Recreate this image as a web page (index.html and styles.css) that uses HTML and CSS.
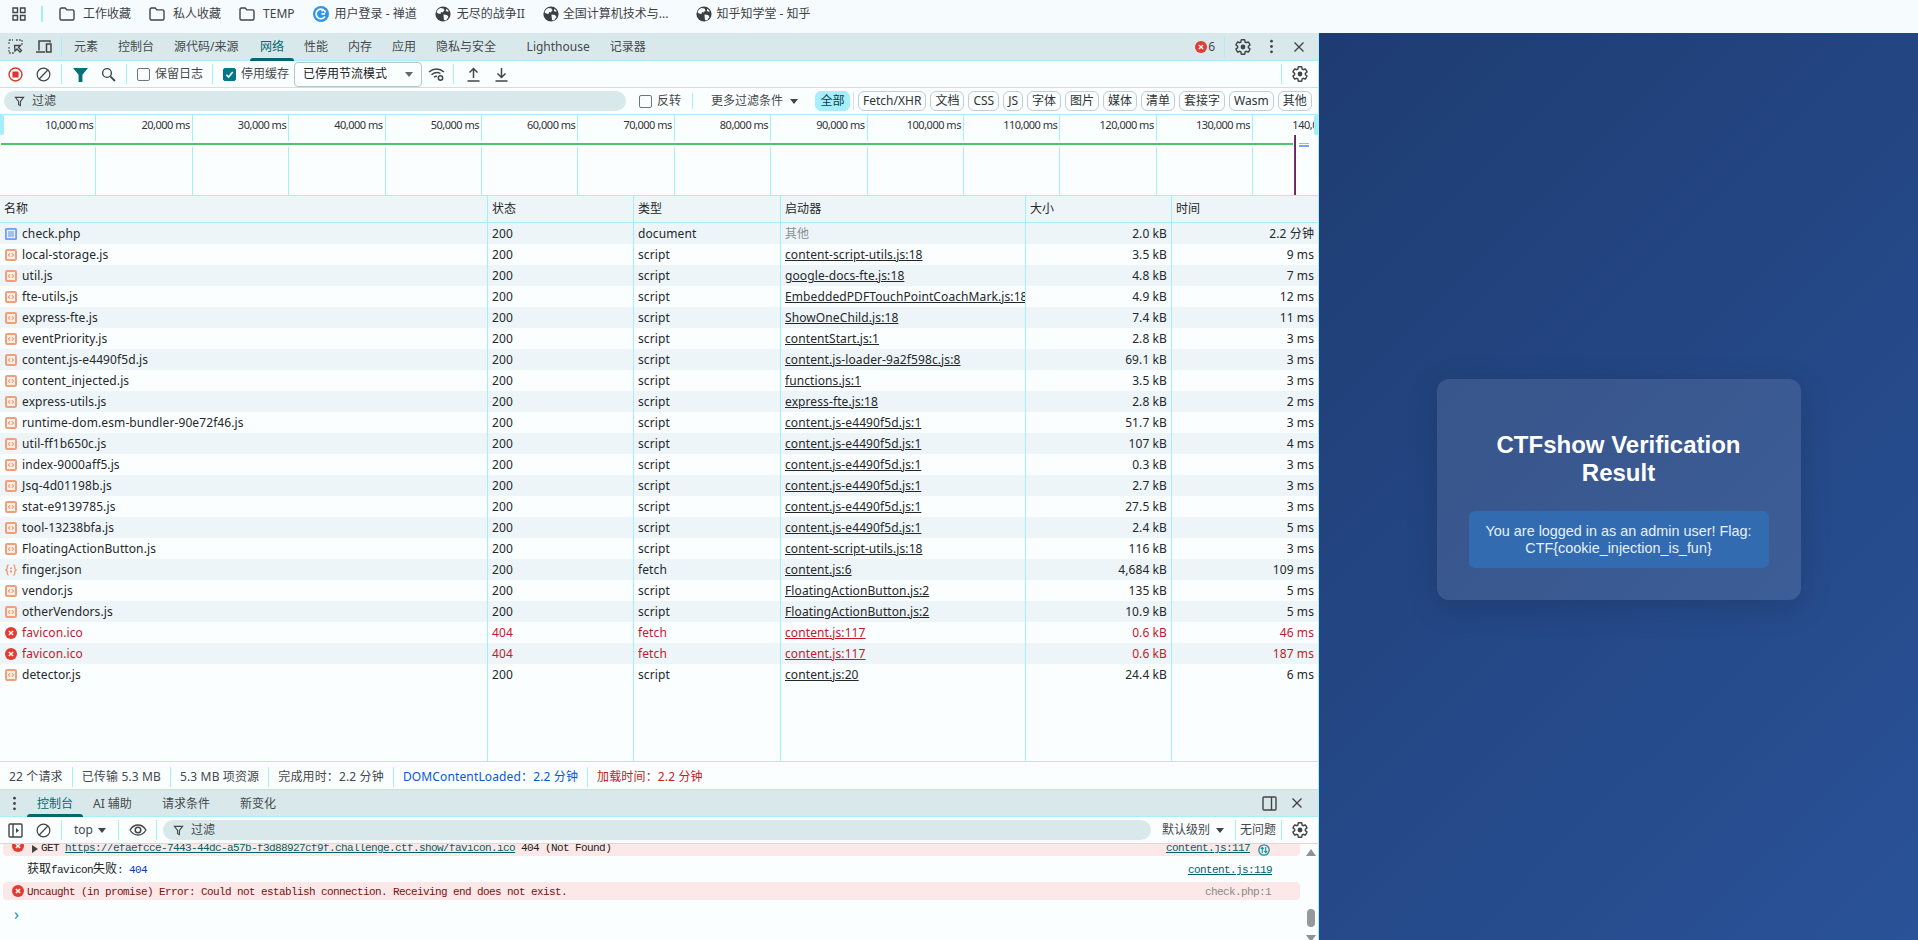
FILE: index.html
```html
<!DOCTYPE html>
<html lang="zh-CN">
<head>
<meta charset="utf-8">
<title>CTFshow Verification Result</title>
<link rel="stylesheet" href="styles.css">
</head>
<body>
<svg class="defs" aria-hidden="true">
  <symbol id="i-folder" viewBox="0 0 16 14"><path d="M1 2.500C1 1.700 1.600 1 2.400 1h3.800l1.600 1.900h5.800c.8 0 1.400.7 1.400 1.500v7.100c0 .8-.6 1.500-1.400 1.500H2.400c-.8 0-1.400-.7-1.400-1.500z" fill="none" stroke="#444" stroke-width="1.400"/></symbol>
  <symbol id="i-globe" viewBox="0 0 16 16"><circle cx="8" cy="8" r="7.600" fill="#3c4043"/><path d="M3 3.500 5.500 2l3 .5 1 2-2 2-1.500-.5-.5 2-2.500-.5L1.400 6zM8.500 8.500l3.500.5 1.500 2L11 14.500l-2-.5-.3-2.500zM11.500 2.800l2.400 2.400-1.900.6-1.200-1.200z" fill="#f8fcff"/></symbol>
  <symbol id="i-js" viewBox="0 0 12 12"><rect x="1" y="1" width="10" height="10" rx="1.200" fill="#fdeee6" stroke="#ee9f7c" stroke-width="2"/><path d="M5 4.200 3.500 6 5 7.800M7 4.200 8.500 6 7 7.800" fill="none" stroke="#e8794a" stroke-width="1"/></symbol>
  <symbol id="i-doc" viewBox="0 0 12 12"><rect width="12" height="12" rx="1.500" fill="#6f9ff7"/><rect x="1.800" y="1.800" width="8.400" height="8.400" fill="#e9f1ff"/><path d="M3 4h6M3 6h6M3 8h6" stroke="#5b8df0" stroke-width="1"/></symbol>
  <symbol id="i-err" viewBox="0 0 12 12"><circle cx="6" cy="6" r="6" fill="#e03c32"/><path d="M3.900 3.900l4.200 4.200M8.100 3.900 3.900 8.100" stroke="#fff" stroke-width="1.400"/></symbol>
  <symbol id="i-json" viewBox="0 0 12 12"><path d="M3.600 1C2 1 2.400 3 2.200 4.200 2 5.400 1 6 1 6s1 .6 1.200 1.800C2.400 9 2 11 3.600 11M8.400 1c1.600 0 1.200 2 1.400 3.200C10 5.400 11 6 11 6s-1 .6-1.200 1.800C9.600 9 10 11 8.400 11" fill="none" stroke="#ee9f7c" stroke-width="1.500"/><path d="M6 3.500v1.400M6 6.500v2" stroke="#e8794a" stroke-width="1.500"/></symbol>
  <symbol id="i-gear" viewBox="0 0 24 24"><path d="M19.140 12.940c.04-.3.06-.61.06-.94 0-.32-.02-.64-.07-.94l2.030-1.580c.18-.14.23-.41.12-.61l-1.920-3.320c-.12-.22-.37-.29-.59-.22l-2.390.96c-.5-.38-1.030-.7-1.620-.94l-.36-2.540c-.04-.24-.24-.41-.48-.41h-3.840c-.24 0-.43.17-.47.41l-.36 2.540c-.59.24-1.130.57-1.620.94l-2.390-.96c-.22-.08-.47 0-.59.22L2.740 8.870c-.12.21-.08.47.12.61l2.030 1.580c-.05.3-.09.63-.09.94s.02.64.07.94l-2.030 1.580c-.18.14-.23.41-.12.61l1.920 3.320c.12.22.37.29.59.22l2.390-.96c.5.38 1.030.7 1.620.94l.36 2.540c.05.24.24.41.48.41h3.840c.24 0 .44-.17.47-.41l.36-2.540c.59-.24 1.130-.56 1.620-.94l2.390.96c.22.08.47 0 .59-.22l1.920-3.320c.12-.22.07-.47-.12-.61l-2.010-1.580z" fill="none" stroke="#444" stroke-width="1.900"/><circle cx="12" cy="12" r="3.200" fill="#444"/></symbol>
  <symbol id="i-close" viewBox="0 0 12 12"><path d="M1.500 1.500l9 9M10.500 1.500l-9 9" stroke="#444" stroke-width="1.400"/></symbol>
  <symbol id="i-block" viewBox="0 0 16 16"><circle cx="8" cy="8" r="6.800" fill="none" stroke="#444" stroke-width="1.300"/><path d="M3.400 12.800 12.600 3.200" stroke="#444" stroke-width="1.300"/></symbol>
  <symbol id="i-funnel" viewBox="0 0 12 12"><path d="M1.500 1.500h9L7 6v4.500L5 9.500V6z" fill="none" stroke="#444" stroke-width="1.200"/></symbol>
</svg>

<nav class="bookmarks">
  <svg class="bm-apps" viewBox="0 0 14 14"><path d="M1 1h4.500v4.500H1zM8.500 1H13v4.500H8.500zM1 8.500h4.500V13H1zM8.500 8.500H13V13H8.500z" fill="none" stroke="#444" stroke-width="1.400"/></svg>
  <span class="bm-sep"></span>
  <a class="bm"><svg class="bm-ic"><use href="#i-folder"/></svg>工作收藏</a>
  <a class="bm"><svg class="bm-ic"><use href="#i-folder"/></svg>私人收藏</a>
  <a class="bm"><svg class="bm-ic"><use href="#i-folder"/></svg>TEMP</a>
  <a class="bm"><svg class="bm-ic bm-round" viewBox="0 0 16 16"><circle cx="8" cy="8" r="8" fill="#2f95ec"/><path d="M12.500 6.500A4.800 4.800 0 1 0 12 10.500M12 7.800H8.500M11 3.500 8.500 5" fill="none" stroke="#fff" stroke-width="1.700"/></svg>用户登录 - 禅道</a>
  <a class="bm"><svg class="bm-ic bm-round"><use href="#i-globe"/></svg>无尽的战争II</a>
  <a class="bm"><svg class="bm-ic bm-round"><use href="#i-globe"/></svg>全国计算机技术与...</a>
  <a class="bm bm-last"><svg class="bm-ic bm-round"><use href="#i-globe"/></svg>知乎知学堂 - 知乎</a>
</nav>

<div class="workspace">
  <section class="devtools">
    <header class="tabbar main-tabs">
      <button class="ib"><svg class="i15" viewBox="0 0 15 15"><path d="M1 5V1.500M1 1h4M8 1h6M14 1v6M1 8v6M1 14h5" fill="none" stroke="#555" stroke-width="1.300" stroke-dasharray="1.800 1.200"/><path d="M6.500 6.500h6L10.500 8.500l3 3-1.500 1.500-3-3-2 2z" fill="none" stroke="#444" stroke-width="1.300"/></svg></button>
      <button class="ib"><svg class="i17" viewBox="0 0 17 15"><path d="M4 11.500V2h11v1.500M1 13h9" fill="none" stroke="#444" stroke-width="1.500"/><rect x="11.500" y="5" width="4.500" height="8" fill="none" stroke="#444" stroke-width="1.500"/></svg></button>
      <span class="sep"></span>
      <a class="tab first">元素</a><a class="tab">控制台</a><a class="tab t-src">源代码/来源</a><a class="tab on">网络</a><a class="tab">性能</a><a class="tab">内存</a><a class="tab">应用</a><a class="tab">隐私与安全</a><a class="tab wide">Lighthouse</a><a class="tab">记录器</a>
      <span class="badge"><svg class="i12"><use href="#i-err"/></svg>6</span>
      <span class="sep"></span>
      <button class="ib"><svg class="i18"><use href="#i-gear"/></svg></button>
      <button class="ib"><svg class="i15" viewBox="0 0 4 14"><circle cx="2" cy="2" r="1.300" fill="#444"/><circle cx="2" cy="7" r="1.300" fill="#444"/><circle cx="2" cy="12" r="1.300" fill="#444"/></svg></button>
      <button class="ib"><svg class="i12"><use href="#i-close"/></svg></button>
    </header>

    <div class="bar">
      <button class="ib"><svg class="i15" viewBox="0 0 16 16"><circle cx="8" cy="8" r="6.900" fill="none" stroke="#dc362e" stroke-width="1.500"/><rect x="4.700" y="4.700" width="6.600" height="6.600" rx=".6" fill="#dc362e"/></svg></button>
      <button class="ib"><svg class="i15"><use href="#i-block"/></svg></button>
      <span class="sep"></span>
      <button class="ib"><svg class="i15" viewBox="0 0 14 14"><path d="M0 1h14L8.800 7.300V14H5.200V7.300z" fill="#00707a"/></svg></button>
      <button class="ib"><svg class="i15" viewBox="0 0 15 15"><circle cx="6" cy="6" r="4.400" fill="none" stroke="#444" stroke-width="1.400"/><path d="M9.300 9.300 14 14" stroke="#444" stroke-width="1.800"/></svg></button>
      <span class="sep"></span>
      <label class="chk chk-first"><span class="box"></span>保留日志</label>
      <span class="sep sep-w"></span>
      <label class="chk"><span class="box checked"><svg viewBox="0 0 12 12"><path d="M2.500 6.200 5 8.700l4.500-5.400" fill="none" stroke="#fff" stroke-width="1.700"/></svg></span>停用缓存</label>
      <span class="select">已停用节流模式<i class="caret"></i></span>
      <button class="ib"><svg class="i17" viewBox="0 0 17 14"><path d="M1 4.500C5.500.5 11.500.5 16 4.500M3.500 7.200C6.500 4.700 10 4.500 12.500 6M6 9.800c1-.9 2-1.200 3-1.100" fill="none" stroke="#444" stroke-width="1.400"/><circle cx="12.500" cy="10.500" r="2.200" fill="none" stroke="#444" stroke-width="1.500"/></svg></button>
      <span class="sep sep-n"></span>
      <button class="ib"><svg class="i15" viewBox="0 0 14 15"><path d="M7 11V1.500M3 5.500l4-4 4 4M1 14h12" fill="none" stroke="#444" stroke-width="1.500"/></svg></button>
      <button class="ib"><svg class="i15" viewBox="0 0 14 15"><path d="M7 1v9.500M3 6.500l4 4 4-4M1 14h12" fill="none" stroke="#444" stroke-width="1.500"/></svg></button>
      <span class="sep push"></span>
      <button class="ib"><svg class="i18"><use href="#i-gear"/></svg></button>
    </div>

    <div class="bar filters">
      <div class="search net-search"><svg class="i11"><use href="#i-funnel"/></svg>过滤</div>
      <label class="chk chk-invert"><span class="box"></span>反转</label>
      <span class="sep sep-f"></span>
      <span class="more">更多过滤条件<i class="caret dark"></i></span>
      <span class="chip on">全部</span>
      <span class="sep sep-c"></span>
      <span class="chip">Fetch/XHR</span><span class="chip">文档</span><span class="chip">CSS</span><span class="chip">JS</span><span class="chip">字体</span><span class="chip">图片</span><span class="chip">媒体</span><span class="chip">清单</span><span class="chip">套接字</span><span class="chip">Wasm</span><span class="chip">其他</span>
    </div>

    <div class="timeline">
      <span class="tick">10,000 ms</span><span class="tick">20,000 ms</span><span class="tick">30,000 ms</span><span class="tick">40,000 ms</span><span class="tick">50,000 ms</span><span class="tick">60,000 ms</span><span class="tick">70,000 ms</span><span class="tick">80,000 ms</span><span class="tick">90,000 ms</span><span class="tick">100,000 ms</span><span class="tick">110,000 ms</span><span class="tick">120,000 ms</span><span class="tick">130,000 ms</span><span class="tick">140,000 ms</span>
      <i class="tl-green"></i><i class="tl-dom"></i><i class="tl-load"></i><i class="tl-bar"></i><i class="tl-handle left"></i><i class="tl-handle right"></i>
    </div>

    <div class="row head"><span class="c">名称</span><span class="c">状态</span><span class="c">类型</span><span class="c">启动器</span><span class="c">大小</span><span class="c">时间</span></div>
    <div class="rows">
      <div class="row"><span class="c n"><svg class="i12"><use href="#i-doc"/></svg>check.php</span><span class="c">200</span><span class="c">document</span><span class="c muted">其他</span><span class="c r">2.0 kB</span><span class="c r">2.2 分钟</span></div>
      <div class="row"><span class="c n"><svg class="i12"><use href="#i-js"/></svg>local-storage.js</span><span class="c">200</span><span class="c">script</span><span class="c"><u>content-script-utils.js:18</u></span><span class="c r">3.5 kB</span><span class="c r">9 ms</span></div>
      <div class="row"><span class="c n"><svg class="i12"><use href="#i-js"/></svg>util.js</span><span class="c">200</span><span class="c">script</span><span class="c"><u>google-docs-fte.js:18</u></span><span class="c r">4.8 kB</span><span class="c r">7 ms</span></div>
      <div class="row"><span class="c n"><svg class="i12"><use href="#i-js"/></svg>fte-utils.js</span><span class="c">200</span><span class="c">script</span><span class="c"><u>EmbeddedPDFTouchPointCoachMark.js:18</u></span><span class="c r">4.9 kB</span><span class="c r">12 ms</span></div>
      <div class="row"><span class="c n"><svg class="i12"><use href="#i-js"/></svg>express-fte.js</span><span class="c">200</span><span class="c">script</span><span class="c"><u>ShowOneChild.js:18</u></span><span class="c r">7.4 kB</span><span class="c r">11 ms</span></div>
      <div class="row"><span class="c n"><svg class="i12"><use href="#i-js"/></svg>eventPriority.js</span><span class="c">200</span><span class="c">script</span><span class="c"><u>contentStart.js:1</u></span><span class="c r">2.8 kB</span><span class="c r">3 ms</span></div>
      <div class="row"><span class="c n"><svg class="i12"><use href="#i-js"/></svg>content.js-e4490f5d.js</span><span class="c">200</span><span class="c">script</span><span class="c"><u>content.js-loader-9a2f598c.js:8</u></span><span class="c r">69.1 kB</span><span class="c r">3 ms</span></div>
      <div class="row"><span class="c n"><svg class="i12"><use href="#i-js"/></svg>content_injected.js</span><span class="c">200</span><span class="c">script</span><span class="c"><u>functions.js:1</u></span><span class="c r">3.5 kB</span><span class="c r">3 ms</span></div>
      <div class="row"><span class="c n"><svg class="i12"><use href="#i-js"/></svg>express-utils.js</span><span class="c">200</span><span class="c">script</span><span class="c"><u>express-fte.js:18</u></span><span class="c r">2.8 kB</span><span class="c r">2 ms</span></div>
      <div class="row"><span class="c n"><svg class="i12"><use href="#i-js"/></svg>runtime-dom.esm-bundler-90e72f46.js</span><span class="c">200</span><span class="c">script</span><span class="c"><u>content.js-e4490f5d.js:1</u></span><span class="c r">51.7 kB</span><span class="c r">3 ms</span></div>
      <div class="row"><span class="c n"><svg class="i12"><use href="#i-js"/></svg>util-ff1b650c.js</span><span class="c">200</span><span class="c">script</span><span class="c"><u>content.js-e4490f5d.js:1</u></span><span class="c r">107 kB</span><span class="c r">4 ms</span></div>
      <div class="row"><span class="c n"><svg class="i12"><use href="#i-js"/></svg>index-9000aff5.js</span><span class="c">200</span><span class="c">script</span><span class="c"><u>content.js-e4490f5d.js:1</u></span><span class="c r">0.3 kB</span><span class="c r">3 ms</span></div>
      <div class="row"><span class="c n"><svg class="i12"><use href="#i-js"/></svg>Jsq-4d01198b.js</span><span class="c">200</span><span class="c">script</span><span class="c"><u>content.js-e4490f5d.js:1</u></span><span class="c r">2.7 kB</span><span class="c r">3 ms</span></div>
      <div class="row"><span class="c n"><svg class="i12"><use href="#i-js"/></svg>stat-e9139785.js</span><span class="c">200</span><span class="c">script</span><span class="c"><u>content.js-e4490f5d.js:1</u></span><span class="c r">27.5 kB</span><span class="c r">3 ms</span></div>
      <div class="row"><span class="c n"><svg class="i12"><use href="#i-js"/></svg>tool-13238bfa.js</span><span class="c">200</span><span class="c">script</span><span class="c"><u>content.js-e4490f5d.js:1</u></span><span class="c r">2.4 kB</span><span class="c r">5 ms</span></div>
      <div class="row"><span class="c n"><svg class="i12"><use href="#i-js"/></svg>FloatingActionButton.js</span><span class="c">200</span><span class="c">script</span><span class="c"><u>content-script-utils.js:18</u></span><span class="c r">116 kB</span><span class="c r">3 ms</span></div>
      <div class="row"><span class="c n"><svg class="i12"><use href="#i-json"/></svg>finger.json</span><span class="c">200</span><span class="c">fetch</span><span class="c"><u>content.js:6</u></span><span class="c r">4,684 kB</span><span class="c r">109 ms</span></div>
      <div class="row"><span class="c n"><svg class="i12"><use href="#i-js"/></svg>vendor.js</span><span class="c">200</span><span class="c">script</span><span class="c"><u>FloatingActionButton.js:2</u></span><span class="c r">135 kB</span><span class="c r">5 ms</span></div>
      <div class="row"><span class="c n"><svg class="i12"><use href="#i-js"/></svg>otherVendors.js</span><span class="c">200</span><span class="c">script</span><span class="c"><u>FloatingActionButton.js:2</u></span><span class="c r">10.9 kB</span><span class="c r">5 ms</span></div>
      <div class="row err"><span class="c n"><svg class="i12"><use href="#i-err"/></svg>favicon.ico</span><span class="c">404</span><span class="c">fetch</span><span class="c"><u>content.js:117</u></span><span class="c r">0.6 kB</span><span class="c r">46 ms</span></div>
      <div class="row err"><span class="c n"><svg class="i12"><use href="#i-err"/></svg>favicon.ico</span><span class="c">404</span><span class="c">fetch</span><span class="c"><u>content.js:117</u></span><span class="c r">0.6 kB</span><span class="c r">187 ms</span></div>
      <div class="row"><span class="c n"><svg class="i12"><use href="#i-js"/></svg>detector.js</span><span class="c">200</span><span class="c">script</span><span class="c"><u>content.js:20</u></span><span class="c r">24.4 kB</span><span class="c r">6 ms</span></div>
      <div class="row filler"><span class="c"></span><span class="c"></span><span class="c"></span><span class="c"></span><span class="c"></span><span class="c"></span></div>
    </div>

    <footer class="status">
      <span class="st">22 个请求</span><span class="st">已传输 5.3 MB</span><span class="st">5.3 MB 项资源</span><span class="st">完成用时：2.2 分钟</span><span class="st blue">DOMContentLoaded：2.2 分钟</span><span class="st red">加载时间：2.2 分钟</span>
    </footer>

    <header class="tabbar drawer-tabs">
      <button class="ib dots"><svg class="i15" viewBox="0 0 4 14"><circle cx="2" cy="2" r="1.300" fill="#444"/><circle cx="2" cy="7" r="1.300" fill="#444"/><circle cx="2" cy="12" r="1.300" fill="#444"/></svg></button>
      <a class="tab on">控制台</a><a class="tab">AI 辅助</a><a class="tab t-req">请求条件</a><a class="tab t-new">新变化</a>
      <button class="ib push"><svg class="i15" viewBox="0 0 15 15"><rect x="1" y="1" width="13" height="13" rx="1" fill="none" stroke="#444" stroke-width="1.400"/><path d="M9.500 1v13" stroke="#444" stroke-width="1.400"/></svg></button>
      <button class="ib"><svg class="i12"><use href="#i-close"/></svg></button>
    </header>

    <div class="bar console-bar">
      <button class="ib"><svg class="i15" viewBox="0 0 15 15"><rect x="1" y="1" width="13" height="13" rx="1" fill="none" stroke="#444" stroke-width="1.400"/><path d="M5 1v13" stroke="#444" stroke-width="1.400"/><path d="M8 5l3 2.500L8 10z" fill="#444"/></svg></button>
      <button class="ib"><svg class="i15"><use href="#i-block"/></svg></button>
      <span class="sep"></span>
      <span class="ctx">top<i class="caret dark"></i></span>
      <span class="sep"></span>
      <button class="ib eye"><svg class="i18" viewBox="0 0 18 12"><path d="M1 6c2-3.300 4.800-5 8-5s6 1.700 8 5c-2 3.300-4.800 5-8 5s-6-1.700-8-5z" fill="none" stroke="#444" stroke-width="1.300"/><circle cx="9" cy="6" r="2.800" fill="none" stroke="#444" stroke-width="1.500"/></svg></button>
      <span class="sep"></span>
      <div class="search con-search"><svg class="i11"><use href="#i-funnel"/></svg>过滤</div>
      <span class="level">默认级别<i class="caret dark"></i></span>
      <span class="sep"></span>
      <span class="issues">无问题</span>
      <span class="sep sep-g"></span>
      <button class="ib"><svg class="i18"><use href="#i-gear"/></svg></button>
    </div>

    <div class="console">
      <div class="messages">
        <div class="msg bad cut">
          <svg class="i12 m-ic"><use href="#i-err"/></svg><i class="tri"></i><span>GET <u class="link">https://efaefcce-7443-44dc-a57b-f3d88927cf9f.challenge.ctf.show/favicon.ico</u> 404 (Not Found)</span>
          <u class="link src">content.js:117</u><svg class="i12 net-ic" viewBox="0 0 12 12"><circle cx="6" cy="6" r="5.200" fill="none" stroke="#1592a3" stroke-width="1.300"/><path d="M4.300 9V3.500M2.800 5l1.500-1.700L5.800 5M7.700 3v5.500M6.200 7l1.500 1.700L9.200 7" fill="none" stroke="#1592a3" stroke-width="1.100"/></svg>
        </div>
        <div class="msg plain">
          <span><span class="cjk">获取</span>favicon<span class="cjk">失败</span>: <b class="num">404</b></span><u class="link src">content.js:119</u>
        </div>
        <div class="msg bad err-text">
          <svg class="i12 m-ic"><use href="#i-err"/></svg><span>Uncaught (in promise) Error: Could not establish connection. Receiving end does not exist.</span><span class="src grey">check.php:1</span>
        </div>
        <div class="prompt">›</div>
      </div>
      <div class="scroll"><i class="sb-up"></i><i class="sb-thumb"></i><i class="sb-down"></i></div>
    </div>
  </section>

  <main class="page">
    <div class="card">
      <h1>CTFshow Verification Result</h1>
      <p class="flag">You are logged in as an admin user! Flag: CTF{cookie_injection_is_fun}</p>
    </div>
  </main>
</div>
</body>
</html>
```
FILE: styles.css
```css
* { box-sizing: border-box; }
html, body { margin: 0; height: 940px; overflow: hidden; }
body {
  font: 12px/16px "Noto Sans", "Noto Sans CJK SC", sans-serif;
  color: #303335;
  background: #f6fbfe;
  display: flex;
  flex-direction: column;
}
.defs { position: absolute; width: 0; height: 0; }
svg { display: block; flex: none; }
.i11 { width: 11px; height: 11px; }
.i12 { width: 12px; height: 12px; }
.i15 { width: 15px; height: 15px; }
.i17 { width: 17px; height: 15px; }
.i18 { width: 18px; height: 18px; }

/* bookmarks */
.bookmarks { height: 33px; flex: none; display: flex; align-items: center; padding: 0 0 6px 12px; color: #3f4245; }
.bm-apps { width: 14px; height: 14px; }
.bm-sep { width: 2px; height: 16px; margin: 0 16px 0 15px; background: #a7eefc; }
.bm { display: flex; align-items: center; gap: 8px; margin-right: 18px; white-space: nowrap; }
.bm-ic { width: 16px; height: 14px; }
.bm-round { height: 16px; margin-right: -2px; }
.bm:nth-of-type(n+6) { gap: 6px; }
.bm-last { margin-left: 10px; }

.workspace { flex: 1; display: flex; min-height: 0; }
.devtools { width: 1319px; flex: none; display: flex; flex-direction: column; background: #fafeff; border-right: 1px solid #a5eefc; }

/* bars */
.ib { width: 28px; height: 24px; flex: none; padding: 0; border: 0; background: none; display: flex; align-items: center; justify-content: center; }
.sep { width: 1px; height: 20px; margin: 0 4px; background: #a5eefc; flex: none; }
.push { margin-left: auto; }
.tabbar { background: #d9e9eb; border-bottom: 1px solid #a5eefc; display: flex; align-items: center; flex: none; color: #45494c; }
.main-tabs { height: 28px; padding-left: 1px; }
.tab { height: 100%; padding: 0 10px; line-height: 28px; white-space: nowrap; position: relative; }
.tab.first { margin-left: -2px; }
.tab.t-src { min-width: 86px; }
.tab.wide { margin-left: 10.500px; }
.tab.on { color: #00696f; }
.tab.on::after { content: ""; position: absolute; left: 0; right: 0; bottom: -1px; height: 3px; background: #00696f; border-radius: 3px 3px 0 0; }
.badge { margin-left: auto; display: flex; align-items: center; gap: 1px; }
.badge + .sep { margin: 0 0 0 9px; }
.main-tabs .badge + .sep + .ib { margin-left: 4px; }
.main-tabs .ib:last-child { margin-right: 5px; }

.bar { height: 27px; flex: none; display: flex; align-items: center; padding-left: 1px; border-bottom: 1px solid #a5eefc; white-space: nowrap; }
.bar > .ib:last-child { margin-right: 4px; }
.chk { display: flex; align-items: center; gap: 5px; color: #45494c; }
.chk-first { margin-left: 6px; }
.sep-w { margin: 0 10px 0 9px; }
.sep-n { margin: 0 5px 0 3px; }
.box { width: 13px; height: 13px; border: 1px solid #70757a; border-radius: 2px; background: #fafeff; }
.box.checked { background: #00788a; border-color: #00788a; }
.box.checked svg { width: 11px; height: 11px; }
.select { width: 128px; height: 25px; margin-left: 5px; padding: 0 8px; border: 1px solid #b9c4c7; border-radius: 4px; line-height: 24px; color: #222; display: flex; align-items: center; justify-content: space-between; }
.caret { display: block; width: 0; height: 0; border: 4px solid transparent; border-top: 5px solid #666; border-bottom: 0; }
.caret.dark { border-top-color: #444; }

.filters { padding-left: 4px; }
.search { display: flex; align-items: center; gap: 7px; height: 20px; border-radius: 10px; background: #d9e9eb; padding-left: 10px; color: #45494c; }
.net-search { width: 622px; }
.chk-invert { margin-left: 13px; }
.sep-f { margin: 0 18px 0 11px; height: 16px; }
.more { display: flex; align-items: center; gap: 7px; color: #45494c; width: 86px; margin-right: 18px; }
.sep-c { margin: 0 4px 0 3px; height: 18px; background: #cfe4e6; }
.chip { height: 20px; padding: 0 4px; margin-right: 4px; border: 1px solid #c4cdd0; border-radius: 6px; line-height: 18px; color: #333; text-align: center; }
.chip.on { background: #a5eefc; border-color: #a5eefc; margin-right: 0; width: 35px; color: #0c3f46; }
.chip:last-child { margin-right: 0; }

/* timeline */
.timeline { height: 81px; flex: none; display: flex; position: relative; overflow: hidden; border-bottom: 1px solid #a5eefc; }
.tick { width: 96.400px; flex: none; text-align: right; padding: 2px 2px 0 0; font-size: 11px; line-height: 16px; letter-spacing: -.5px; border-right: 1px solid #a5eefc; color: #333; white-space: nowrap; }
.tl-green { position: absolute; left: 1px; right: 25px; top: 26px; height: 6px; background: #4fc46f; border: solid #fafeff; border-width: 2px 0; }
.tl-dom { position: absolute; left: 1294px; top: 20px; bottom: 0; width: 1px; background: #c5221f; }
.tl-load { position: absolute; left: 1295px; top: 20px; bottom: 0; width: 1px; background: #1a3fb5; }
.tl-bar { position: absolute; left: 1299px; top: 28px; width: 10px; height: 4px; border-top: 1px solid #9db8e8; border-bottom: 2px solid #7aa4ee; }
.tl-handle { position: absolute; top: 0; width: 4px; height: 20px; background: #a5eefc; }
.tl-handle.left { left: 0; border-radius: 0 2px 2px 0; }
.tl-handle.right { right: 0; border-radius: 2px 0 0 2px; }

/* table */
.row { display: grid; grid-template-columns: 488px 146px 147px 245px 146px 146px; flex: none; height: 21px; line-height: 21px; color: #25282a; letter-spacing: .1px; }
.row .c { padding: 0 4px; border-right: 1px solid #a5eefc; overflow: hidden; white-space: nowrap; }
.row .c:last-child { border-right: 0; }
.row u { text-decoration-thickness: 1px; text-underline-offset: 1px; }
.head { height: 27px; line-height: 26px; background: #eef5f8; border-bottom: 1px solid #a5eefc; }
.rows { flex: 1; min-height: 0; display: flex; flex-direction: column; }
.row:nth-child(odd):not(.filler):not(.head) { background: #eef5f8; }
.n { display: flex; align-items: center; gap: 5px; padding-left: 5px !important; }
.r { text-align: right; }
.muted { color: #8a8e91; }
.err { color: #c5172d; }
.filler { flex: 1; height: auto; }

/* status */
.status { height: 28px; flex: none; display: flex; align-items: center; border-top: 1px solid #a5eefc; color: #45494c; padding-top: 2px; letter-spacing: .14px; }
.st { padding: 0 9px; height: 20px; line-height: 20px; border-right: 1px solid #a5eefc; white-space: nowrap; }
.st:last-child { border-right: 0; }
.blue { color: #0b57d0; }
.red { color: #c5221f; }

.drawer-tabs { height: 28px; border-top: 1px solid #a5eefc; padding-left: 1px; }
.drawer-tabs .dots { width: 26px; }
.drawer-tabs .tab { line-height: 27px; }
.t-req { margin-left: 10px; }
.t-new { margin-left: 10px; }
.drawer-tabs .push + .ib { margin-right: 7px; }

.console-bar .ctx { display: flex; align-items: center; gap: 5px; margin: 0 7px 0 8px; color: #45494c; width: 33px; }
.eye { margin: 0 0 0 1px; }
.con-search { width: 988px; margin-left: 2px; }
.level { display: flex; align-items: center; gap: 6px; margin: 0 7px 0 11px; color: #45494c; }
.issues { margin-right: 2px; color: #45494c; }
.sep-g { margin: 0 4px 0 3px; }

/* console */
.console { flex: none; height: 96px; display: flex; background: #fafeff; overflow: hidden; }
.messages { flex: 1; min-width: 0; padding-left: 3px; font: 11px/18px "Liberation Mono", "Noto Sans CJK SC", monospace; letter-spacing: -.6px; color: #222; overflow: hidden; }
.msg { display: flex; align-items: center; white-space: nowrap; padding-left: 24px; position: relative; }
.bad { background: #fce8e8; border-radius: 4px; }
.cut { height: 12px; padding-left: 38px; align-items: flex-end; border-radius: 0 0 4px 4px; overflow: hidden; }
.cut span, .cut .src { height: 18px; margin-bottom: -1px; }
.m-ic { position: absolute; left: 9px; top: 3px; }
.cut .m-ic { top: -4px; }
.tri { position: absolute; left: 29px; top: 1px; width: 0; height: 0; border: 4px solid transparent; border-left: 6px solid #444; border-right: 0; }
.link { color: #00626b; }
.src { margin-left: auto; padding-right: 28px; text-decoration: underline; }
u.src { text-underline-offset: 1px; }
.cut .src { padding-right: 8px; }
.net-ic { margin-right: 30px; }
.plain { height: 26px; padding-top: 2px; }
.cjk { font-size: 12px; letter-spacing: 0; }
.num { color: #0b3da8; font-weight: 400; }
.err-text { height: 18px; padding-top: 1px; color: #7d0f0f; }
.grey { color: #888; text-decoration: none; padding-right: 29px; }
.prompt { padding: 4px 0 0 11px; color: #1592a3; font: 16px/20px "Noto Sans", sans-serif; }
.scroll { width: 18px; flex: none; display: flex; flex-direction: column; align-items: center; padding: 5px 0 0 4px; }
.sb-up { flex: none; width: 0; height: 0; border: 5px solid transparent; border-top: 0; border-bottom: 7px solid #8e9294; }
.sb-thumb { flex: none; width: 8px; height: 18px; margin-top: 53px; border-radius: 4px; background: #95999b; }
.sb-down { flex: none; width: 0; height: 0; margin-top: 8px; border: 5px solid transparent; border-bottom: 0; border-top: 7px solid #8e9294; }

/* page */
.page { flex: 1; min-width: 0; display: flex; align-items: center; justify-content: center; padding-top: 6px; background: linear-gradient(135deg, #1e3c72, #2a5298); font-family: "Liberation Sans", Arial, sans-serif; }
.card { width: 364px; height: 221px; padding: 32px; border-radius: 12px; background: rgba(255, 255, 255, .1); box-shadow: 0 8px 32px rgba(0, 0, 0, .15); text-align: center; color: #fff; }
h1 { margin: 20px 0 24px; font-size: 24px; line-height: 28px; font-weight: 700; }
.flag { margin: 0; padding: 12px 6px; min-height: 57px; border-radius: 6px; background: #326bb0; font-size: 14.400px; line-height: 16.500px; color: #e8f0fa; }
```
